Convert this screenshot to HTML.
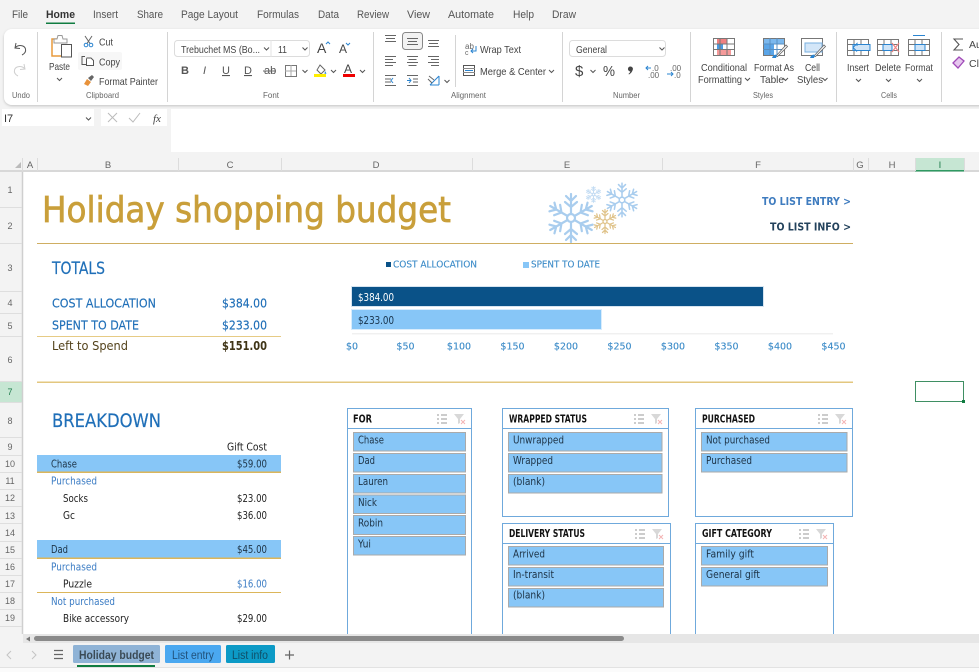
<!DOCTYPE html>
<html><head><meta charset="utf-8"><title>Holiday budget</title>
<style>
html,body{margin:0;padding:0;background:#fff;overflow:hidden}
svg{display:block}
.u{font-family:"Liberation Sans",sans-serif;font-size:10.5px;fill:#444}
.g{font-family:"Liberation Sans",sans-serif;font-size:8.5px;fill:#666}
.m{font-family:"Liberation Sans",sans-serif;font-size:11px;fill:#555}
.h{font-family:"Liberation Sans",sans-serif;font-size:10px;fill:#666}
.r{font-family:"Liberation Sans",sans-serif;font-size:9px;fill:#666;text-anchor:middle}
.c{font-family:"DejaVu Sans",sans-serif;font-size:10.5px;fill:#222}
.b{font-family:"DejaVu Sans",sans-serif;font-size:10.5px;fill:#3b7cc4}
.n{font-family:"DejaVu Sans",sans-serif;font-size:12.5px;fill:#1f6fb8;stroke:#1f6fb8;stroke-width:.15px}
.a{font-family:"DejaVu Sans",sans-serif;font-size:9.5px;fill:#3b8bc8;stroke:#3b8bc8;stroke-width:.12px}
.s{font-family:"DejaVu Sans",sans-serif;font-size:10.5px;fill:#1d3346}
.t{font-family:"DejaVu Sans",sans-serif;font-size:10.5px;font-weight:bold;fill:#111}
</style></head><body>
<svg width="979" height="672" viewBox="0 0 979 672" xmlns="http://www.w3.org/2000/svg">
<defs>
<filter id="sh" x="-2%" y="-10%" width="104%" height="125%"><feDropShadow dx="0" dy="1" stdDeviation="1.2" flood-color="#000" flood-opacity=".2"/></filter>
<g id="flake" fill="none" stroke-linecap="round">
<circle cx="0" cy="0" r="4"/>
<g id="arm"><path d="M0-4V-24M0-11l-6-5M0-11l6-5M0-17l-5-5M0-17l5-5"/></g>
<use href="#arm" transform="rotate(60)"/><use href="#arm" transform="rotate(120)"/><use href="#arm" transform="rotate(180)"/><use href="#arm" transform="rotate(240)"/><use href="#arm" transform="rotate(300)"/>
</g>
<g id="sl-ico" fill="none">
<path d="M0 2h2M0 6h2M0 10h2M4 2h6M4 6h6M4 10h6" stroke="#999" stroke-width="1"/>
<path d="M17 1h10l-4 5v4l-2 1V6z" fill="#d8d8d8"/><path d="M24 7l4 4M28 7l-4 4" stroke="#f4b4b4" stroke-width="1"/>
</g>
</defs>

<rect width="979" height="672" fill="#f3f3f3"/>

<!-- menu -->
<text class="m" x="12" y="18" textLength="16" lengthAdjust="spacingAndGlyphs">File</text>
<text class="m" x="46" y="18" textLength="29" lengthAdjust="spacingAndGlyphs" style="font-weight:bold;fill:#333">Home</text>
<rect x="46" y="22.500" width="29" height="1.500" fill="#107c41"/>
<text class="m" x="93" y="18" textLength="25" lengthAdjust="spacingAndGlyphs">Insert</text>
<text class="m" x="137" y="18" textLength="26" lengthAdjust="spacingAndGlyphs">Share</text>
<text class="m" x="181" y="18" textLength="57" lengthAdjust="spacingAndGlyphs">Page Layout</text>
<text class="m" x="257" y="18" textLength="42" lengthAdjust="spacingAndGlyphs">Formulas</text>
<text class="m" x="318" y="18" textLength="21" lengthAdjust="spacingAndGlyphs">Data</text>
<text class="m" x="357" y="18" textLength="32" lengthAdjust="spacingAndGlyphs">Review</text>
<text class="m" x="407" y="18" textLength="23" lengthAdjust="spacingAndGlyphs">View</text>
<text class="m" x="448" y="18" textLength="46" lengthAdjust="spacingAndGlyphs">Automate</text>
<text class="m" x="513" y="18" textLength="21" lengthAdjust="spacingAndGlyphs">Help</text>
<text class="m" x="552" y="18" textLength="24" lengthAdjust="spacingAndGlyphs">Draw</text>

<!-- ribbon -->
<rect x="4" y="29" width="990" height="76" rx="8" fill="#fff" filter="url(#sh)"/>
<g stroke="#d4d4d4" stroke-width="1">
<path d="M37.500 32V102M167.500 32V102M373.500 32V102M455.500 35V87M562.500 32V102M690.500 32V102M836.500 32V102M941.500 32V102"/>
</g>
<text class="g" x="12" y="98" textLength="18" lengthAdjust="spacingAndGlyphs">Undo</text>
<text class="g" x="86" y="98" textLength="33" lengthAdjust="spacingAndGlyphs">Clipboard</text>
<text class="g" x="263" y="98" textLength="16" lengthAdjust="spacingAndGlyphs">Font</text>
<text class="g" x="451" y="98" textLength="35" lengthAdjust="spacingAndGlyphs">Alignment</text>
<text class="g" x="613" y="98" textLength="27" lengthAdjust="spacingAndGlyphs">Number</text>
<text class="g" x="753" y="98" textLength="20" lengthAdjust="spacingAndGlyphs">Styles</text>
<text class="g" x="881" y="98" textLength="16" lengthAdjust="spacingAndGlyphs">Cells</text>

<!-- undo / redo -->
<path d="M16 43l-1 5 5 .5M15.500 47.500c3-3 9-2.500 10 1.500 .7 3-1.500 5-3.500 6" fill="none" stroke="#555" stroke-width="1"/>
<path d="M24 64l1 5-5 .5M24.500 68.500c-3-3-9-2.500-10 1.500-.7 3 1.500 5 3.500 6" fill="none" stroke="#cfcfcf" stroke-width="1"/>

<!-- paste -->
<path d="M63 39h-11v17h9" fill="none" stroke="#e89a3c" stroke-width="1.500"/>
<path d="M54 39h3l1-3.500h4l1 3.500h4v4h-13z" fill="#fff" stroke="#999"/>
<rect x="61.500" y="44.500" width="10" height="12.500" fill="#fff" stroke="#555"/>
<text class="u" x="49" y="70" textLength="21" lengthAdjust="spacingAndGlyphs">Paste</text>
<path d="M57 78l2.500 2.500L62 78" fill="none" stroke="#555"/>
<!-- cut copy painter -->
<path d="M85 36l5 7.500M92 36l-5 7.500" stroke="#666" fill="none"/>
<circle cx="86" cy="45" r="1.800" fill="none" stroke="#2a84d0"/><circle cx="91" cy="45" r="1.800" fill="none" stroke="#2a84d0"/>
<text class="u" x="99" y="45.500" textLength="14" lengthAdjust="spacingAndGlyphs">Cut</text>
<rect x="78" y="52" width="44" height="18" rx="2" fill="#f7f7f7"/>
<path d="M85 56.500h-3v8h4" fill="none" stroke="#555"/><path d="M86.500 58.500v7h7v-5l-2.500-2.500h-4.500" fill="#fff" stroke="#555"/>
<text class="u" x="99" y="65.500" textLength="21" lengthAdjust="spacingAndGlyphs">Copy</text>
<path d="M84 84l3-5 4 3-3 4z" fill="#e8923a"/><path d="M88 78l4-3 2 2-3 4z" fill="#666"/>
<text class="u" x="99" y="85" textLength="59" lengthAdjust="spacingAndGlyphs">Format Painter</text>

<!-- font -->
<rect x="174.500" y="40.500" width="135" height="16" rx="3" fill="#fff" stroke="#dcdcdc"/>
<path d="M271 40v17" stroke="#e3e3e3"/>
<text class="u" x="181" y="53" textLength="79" lengthAdjust="spacingAndGlyphs">Trebuchet MS (Bo...</text>
<text class="u" x="278" y="53" textLength="9" lengthAdjust="spacingAndGlyphs">11</text>
<path d="M264 47.500l2.500 2.500 2.500-2.500M302.500 47.500l2.500 2.500 2.500-2.500" fill="none" stroke="#555"/>
<text class="u" x="317" y="53" style="font-size:14px">A</text><path d="M326 44l2-2 2 2" stroke="#2a84d0" fill="none"/>
<text class="u" x="339" y="53" style="font-size:12px">A</text><path d="M346 43l2 2 2-2" stroke="#2a84d0" fill="none"/>
<g style="font-family:'Liberation Sans',sans-serif;font-size:11px;fill:#555">
<text x="181" y="74" font-weight="bold">B</text>
<text x="203" y="74" font-style="italic">I</text>
<text x="222" y="74" text-decoration="underline">U</text>
<text x="244" y="74" text-decoration="underline">D</text>
<text x="264" y="74">ab</text>
</g>
<path d="M263 71h13" stroke="#666"/>
<rect x="285.500" y="65.500" width="11" height="11" fill="none" stroke="#777"/><path d="M291 65v11M285 71h11" stroke="#aaa"/>
<path d="M302.500 70l2.500 2.500 2.500-2.500M331 70l2.500 2.500 2.500-2.500M360 70l2.500 2.500 2.500-2.500" fill="none" stroke="#555"/>
<path d="M320 65l5 5-4 4-4-4z" fill="#fff" stroke="#666"/><path d="M325 71l1.500 2.500-2 .5z" fill="#2a84d0"/>
<rect x="314" y="74" width="12" height="3" fill="#ffee00"/>
<text class="u" x="344" y="73" style="font-size:12px">A</text>
<rect x="343" y="74" width="12" height="3" fill="#e00"/>

<!-- alignment -->
<rect x="402.500" y="32.500" width="20" height="17" rx="3" fill="#f2f2f2" stroke="#888"/>
<g stroke="#666" stroke-width="1" fill="none">
<path d="M385 35.500h11M386 38.500h9M385 41.500h11"/>
<path d="M407 38.500h11M408 41.500h9M407 44.500h11"/>
<path d="M428 40.500h11M429 43.500h9M428 46.500h11"/>
<path d="M385 56.500h11M385 59.500h8M385 62.500h11M385 65.500h8"/>
<path d="M407 56.500h11M408.500 59.500h8M407 62.500h11M408.500 65.500h8"/>
<path d="M428 56.500h11M431 59.500h8M428 62.500h11M431 65.500h8"/>
<path d="M385 75.500h11M385 85.500h11M385 79h6M385 82h6"/>
<path d="M407 75.500h11M407 85.500h11M413 79h5M413 82h5"/>
</g>
<path d="M393 78l-2 2.500 2 2.500M407 80.500h4M409 78l2 2.500-2 2.500" fill="none" stroke="#2a84d0"/>
<path d="M430 85l9-9M430 85h9M439 76v9" fill="none" stroke="#2a84d0"/>
<path d="M429 76l5 4M428 79l4 4" stroke="#666" fill="none"/>
<path d="M444.500 80l2.500 2.500 2.500-2.500" fill="none" stroke="#555"/>
<text class="h" x="465" y="49" style="font-size:8px">ab</text><text class="h" x="465" y="55" style="font-size:7px">c</text>
<path d="M476 46v5h-5M473 49l-2 2 2 2" fill="none" stroke="#2a84d0"/>
<text class="u" x="480" y="53" textLength="41" lengthAdjust="spacingAndGlyphs">Wrap Text</text>
<rect x="463.500" y="65.500" width="11" height="10" fill="none" stroke="#555"/><path d="M463 68.500h12M463 72.500h12" stroke="#888"/><path d="M465 70.500h8" stroke="#2a84d0"/>
<text class="u" x="480" y="75" textLength="66" lengthAdjust="spacingAndGlyphs">Merge &amp; Center</text>
<path d="M549 70l2.500 2.500 2.500-2.500" fill="none" stroke="#555"/>

<!-- number -->
<rect x="569.500" y="40.500" width="96" height="16" rx="3" fill="#fff" stroke="#dcdcdc"/>
<text class="u" x="576" y="53" textLength="31" lengthAdjust="spacingAndGlyphs">General</text>
<path d="M659.500 47.500l2.500 2.500 2.500-2.500M590.500 70l2.500 2.500 2.500-2.500" fill="none" stroke="#555"/>
<text class="u" x="575" y="76" style="font-size:15px">$</text>
<text class="u" x="603" y="76" textLength="12" lengthAdjust="spacingAndGlyphs" style="font-size:15px">%</text>
<path d="M630.500 66.500a2.500 2.500 0 0 1 2 4c-.6 1.500-1.800 3-3.500 4l-.5-.6c1-.8 1.600-1.500 1.800-2.500a2.200 2.200 0 0 1 .2-4.900z" fill="#444"/>
<text class="g" x="652" y="71" style="font-size:8px">.0</text><text class="g" x="648" y="78" style="font-size:8px">.00</text>
<path d="M646 68h5M648 66l-2 2 2 2" fill="none" stroke="#2a84d0"/>
<text class="g" x="670" y="71" style="font-size:8px">.00</text><text class="g" x="674" y="78" style="font-size:8px">.0</text>
<path d="M667 74h6M671 72l2 2-2 2" fill="none" stroke="#2a84d0"/>

<!-- styles -->
<rect x="713.500" y="38.500" width="21" height="17" fill="#fff" stroke="#777"/>
<rect x="717" y="39" width="10" height="5" fill="#f08080"/><rect x="717" y="44" width="6" height="5" fill="#4a9ae0"/><rect x="717" y="49" width="14" height="6" fill="#f59a9a"/>
<path d="M713 44h22M713 49.500h22M720 38v17M727 38v17" stroke="#777" fill="none"/>
<text class="u" x="701" y="71" textLength="46" lengthAdjust="spacingAndGlyphs">Conditional</text>
<text class="u" x="698" y="83" textLength="44" lengthAdjust="spacingAndGlyphs">Formatting</text>
<path d="M745 78l2.500 2.500L750 78M783 78l2.500 2.500L788 78M822.500 78l2.500 2.500 2.500-2.500" fill="none" stroke="#555"/>
<rect x="763.500" y="38.500" width="21" height="17" fill="#fff" stroke="#777"/>
<rect x="764" y="39" width="20" height="5" fill="#7bb8ee"/><rect x="764" y="44" width="10" height="11" fill="#5aa5e8"/>
<path d="M763 44h21M763 49.500h21M770 38v17M777 38v17" stroke="#5a8fc0" fill="none"/>
<path d="M776 56l10-11 1.500 1.500-10 10z" fill="#fff" stroke="#666" stroke-width=".8"/><path d="M772 58c1-3 3-4 5-3l-1 3z" fill="#2a84d0"/>
<text class="u" x="754" y="71" textLength="40" lengthAdjust="spacingAndGlyphs">Format As</text>
<text class="u" x="760" y="83" textLength="24" lengthAdjust="spacingAndGlyphs">Table</text>
<rect x="801.500" y="38.500" width="21" height="17" fill="#fff" stroke="#777"/><rect x="805" y="43" width="17" height="9" fill="#d3e6f8" stroke="#7ab0e0"/>
<path d="M814 56l10-11 1.500 1.500-10 10z" fill="#fff" stroke="#666" stroke-width=".8"/><path d="M810 58c1-3 3-4 5-3l-1 3z" fill="#2a84d0"/>
<text class="u" x="805" y="71" textLength="15" lengthAdjust="spacingAndGlyphs">Cell</text>
<text class="u" x="797" y="83" textLength="26" lengthAdjust="spacingAndGlyphs">Styles</text>

<!-- cells -->
<rect x="847.500" y="39.500" width="21" height="16" fill="#fff" stroke="#777"/><path d="M847 44.500h22M847 50.500h22M854 39v16M861 39v16" stroke="#777"/>
<rect x="853" y="44.500" width="17" height="6" fill="#cfe4f7" stroke="#2a84d0"/><path d="M853 47.500l4-4v2.500M853 47.500l4 4" fill="none" stroke="#2a84d0"/>
<text class="u" x="847" y="71" textLength="22" lengthAdjust="spacingAndGlyphs">Insert</text>
<rect x="877.500" y="39.500" width="21" height="16" fill="#fff" stroke="#777"/><path d="M877 44.500h22M877 50.500h22M884 39v16M891 39v16" stroke="#777"/>
<rect x="883" y="44.500" width="9" height="6" fill="#cfe4f7" stroke="#2a84d0"/><path d="M892 43l7 9M899 43l-7 9" stroke="#f08080" stroke-width="1.100"/>
<text class="u" x="875" y="71" textLength="26" lengthAdjust="spacingAndGlyphs">Delete</text>
<rect x="908.500" y="39.500" width="21" height="16" fill="#fff" stroke="#777"/><path d="M908 44.500h22M908 50.500h22M915 39v16M922 39v16" stroke="#777"/>
<path d="M913 35.500h12" stroke="#2a84d0"/><rect x="915" y="44.500" width="10" height="6" fill="#cfe4f7" stroke="#2a84d0"/>
<text class="u" x="905" y="71" textLength="28" lengthAdjust="spacingAndGlyphs">Format</text>
<path d="M856 79l2.500 2.500L861 79M886 79l2.500 2.500L891 79M917 79l2.500 2.500L922 79" fill="none" stroke="#555"/>
<path d="M963 39h-9l5 5.500-5 5.500h9" fill="none" stroke="#555" stroke-width="1.100"/>
<text class="u" x="969" y="48">Au</text>
<path d="M953 63l6-6 5 4-6 7z" fill="#e6c7ee" stroke="#a04ab8" stroke-width="1.300"/>
<text class="u" x="969" y="67">Cle</text>

<!-- formula bar -->
<rect x="2" y="109" width="92" height="17" fill="#fff"/>
<text class="m" x="4" y="122" style="fill:#333">I7</text>
<path d="M86 117.500l2.500 2.500 2.500-2.500" fill="none" stroke="#555"/>
<rect x="101" y="109" width="66" height="17" fill="#fff"/>
<path d="M108 113l9 9M117 113l-9 9" stroke="#bbb" fill="none"/>
<path d="M129 118l4 4 7-9" stroke="#bbb" fill="none"/>
<text x="153" y="122" style="font-family:'Liberation Serif',serif;font-style:italic;font-size:11px;fill:#444">fx</text>
<rect x="171" y="109" width="808" height="43" fill="#fff"/>

<!-- headers -->
<rect x="0" y="157" width="979" height="14" fill="#f3f3f3"/>
<path d="M0 171h979" stroke="#cfcfcf" stroke-width="1.500"/>
<path d="M15 168l6-6v6z" fill="#bbb"/>
<rect x="915" y="158" width="49" height="13" fill="#c6e6d3"/><rect x="915" y="170" width="49" height="1.500" fill="#2f9a62"/>
<g stroke="#dcdcdc"><path d="M22.500 158v13M37.500 158v13M178.500 158v13M281.500 158v13M472.500 158v13M662.500 158v13M853.500 158v13M868.500 158v13M915.500 158v13M964.500 158v13"/></g>
<g class="r" style="font-size:9.500px">
<text x="30" y="168">A</text><text x="108" y="168">B</text><text x="230" y="168">C</text><text x="376" y="168">D</text><text x="567" y="168">E</text><text x="758" y="168">F</text><text x="860" y="168">G</text><text x="892" y="168">H</text><text x="940" y="168" style="fill:#1c7a4a">I</text>
</g>

<!-- sheet -->
<rect x="23" y="172" width="956" height="462" fill="#fff"/>
<rect x="0" y="172" width="22" height="462" fill="#f3f3f3"/>
<rect x="0" y="381" width="22" height="21" fill="#c6e6d3"/>
<path d="M22.500 172V634" stroke="#cfcfcf" stroke-width="1.500"/>
<g stroke="#dedede"><path d="M0 207.500h22M0 243.500h22M0 291.500h22M0 313.500h22M0 336.500h22M0 381.500h22M0 402.500h22M0 437.500h22M0 455.500h22M0 472.500h22M0 489.500h22M0 506.500h22M0 523.500h22M0 541.500h22M0 558.500h22M0 575.500h22M0 592.500h22M0 609.500h22M0 626.500h22"/></g>
<g class="r">
<text x="10" y="193">1</text><text x="10" y="229">2</text><text x="10" y="271">3</text><text x="10" y="306">4</text><text x="10" y="329">5</text><text x="10" y="363">6</text><text x="10" y="395" style="fill:#1c7a4a">7</text><text x="10" y="424">8</text><text x="10" y="450">9</text><text x="10" y="467">10</text><text x="10" y="484">11</text><text x="10" y="501">12</text><text x="10" y="519">13</text><text x="10" y="536">14</text><text x="10" y="553">15</text><text x="10" y="570">16</text><text x="10" y="587">17</text><text x="10" y="604">18</text><text x="10" y="621">19</text>
</g>

<!-- title -->
<text x="42" y="222" textLength="409" lengthAdjust="spacingAndGlyphs" style="font-family:'DejaVu Sans',sans-serif;font-size:35.500px;fill:#c99f3a;stroke:#c99f3a;stroke-width:.7px">Holiday shopping budget</text>
<g transform="translate(571,218)" stroke="#a9cdee" stroke-width="2.200"><use href="#flake"/></g>
<g transform="translate(622,200) scale(.7)" stroke="#a9cdee" stroke-width="2.200"><use href="#flake"/></g>
<g transform="translate(593.500,194.500) scale(.33)" stroke="#c3dcf3" stroke-width="3"><use href="#flake"/></g>
<g transform="translate(605,221.500) scale(.5)" stroke="#e0c48c" stroke-width="2.500"><use href="#flake"/></g>

<text x="762" y="205" textLength="89" lengthAdjust="spacingAndGlyphs" style="font-family:'DejaVu Sans',sans-serif;font-size:10.500px;font-weight:bold;fill:#3f7cbf">TO LIST ENTRY &gt;</text>
<text x="770" y="230.500" textLength="81" lengthAdjust="spacingAndGlyphs" style="font-family:'DejaVu Sans',sans-serif;font-size:10.500px;font-weight:bold;fill:#23425c">TO LIST INFO &gt;</text>
<rect x="37" y="243" width="816" height="1" fill="#cfae62"/>

<!-- totals -->
<text x="52" y="274" textLength="53" lengthAdjust="spacingAndGlyphs" style="font-family:'DejaVu Sans',sans-serif;font-size:16.500px;fill:#1f6fb8;stroke:#1f6fb8;stroke-width:.2px">TOTALS</text>
<text class="n" x="52" y="307.500" textLength="104" lengthAdjust="spacingAndGlyphs">COST ALLOCATION</text>
<text class="n" x="222" y="307.500" textLength="45" lengthAdjust="spacingAndGlyphs">$384.00</text>
<text class="n" x="52" y="329.500" textLength="87" lengthAdjust="spacingAndGlyphs">SPENT TO DATE</text>
<text class="n" x="222" y="329.500" textLength="45" lengthAdjust="spacingAndGlyphs">$233.00</text>
<rect x="37" y="336" width="244" height="1" fill="#e6cb85"/>
<text x="52" y="350" textLength="76" lengthAdjust="spacingAndGlyphs" style="font-family:'DejaVu Sans',sans-serif;font-size:12.500px;fill:#54431c">Left to Spend</text>
<text x="222" y="350" textLength="45" lengthAdjust="spacingAndGlyphs" style="font-family:'DejaVu Sans',sans-serif;font-size:12.500px;font-weight:bold;fill:#3f3416">$151.00</text>
<rect x="37" y="381.500" width="816" height="1.500" fill="#e3c77f"/>

<!-- chart -->
<rect x="386" y="262" width="5" height="5" fill="#0a5288"/>
<text class="a" x="393" y="267.500" textLength="84" lengthAdjust="spacingAndGlyphs">COST ALLOCATION</text>
<rect x="523" y="262" width="6" height="6" fill="#87c6f7"/>
<text class="a" x="531" y="267.500" textLength="69" lengthAdjust="spacingAndGlyphs">SPENT TO DATE</text>
<rect x="351.500" y="286.500" width="412" height="20" fill="#0a5288" stroke="#d6e4f0"/>
<rect x="351.500" y="309.500" width="250" height="20" fill="#87c6f7" stroke="#d8ecfc"/>
<text x="358" y="301" textLength="36" lengthAdjust="spacingAndGlyphs" style="font-family:'DejaVu Sans',sans-serif;font-size:10.500px;fill:#fff">$384.00</text>
<text x="358" y="324" textLength="36" lengthAdjust="spacingAndGlyphs" style="font-family:'DejaVu Sans',sans-serif;font-size:10.500px;fill:#17324a">$233.00</text>
<rect x="352" y="333" width="481" height="1.500" fill="#f0f0f0"/>
<g class="a" text-anchor="middle">
<text x="352" y="349.500">$0</text><text x="405.500" y="349.500">$50</text><text x="459" y="349.500">$100</text><text x="512.500" y="349.500">$150</text><text x="566" y="349.500">$200</text><text x="619.500" y="349.500">$250</text><text x="673" y="349.500">$300</text><text x="726.500" y="349.500">$350</text><text x="780" y="349.500">$400</text><text x="833.500" y="349.500">$450</text>
</g>

<!-- selected cell -->
<rect x="915.500" y="381.500" width="48" height="20" fill="none" stroke="#3f8f63"/>
<rect x="962" y="400" width="3" height="3" fill="#107c41"/>

<!-- breakdown -->
<text x="52" y="427" textLength="109" lengthAdjust="spacingAndGlyphs" style="font-family:'DejaVu Sans',sans-serif;font-size:18.500px;fill:#1f6fb8;stroke:#1f6fb8;stroke-width:.2px">BREAKDOWN</text>
<text class="c" x="227" y="450.500" textLength="40" lengthAdjust="spacingAndGlyphs">Gift Cost</text>
<rect x="37" y="455" width="244" height="17" fill="#87c6f7"/><rect x="37" y="471.500" width="244" height="1.500" fill="#dcb65a"/>
<text class="s" x="51" y="467.500" textLength="26" lengthAdjust="spacingAndGlyphs">Chase</text>
<text class="s" x="237" y="467.500" textLength="30" lengthAdjust="spacingAndGlyphs">$59.00</text>
<text class="b" x="51" y="484.500" textLength="46" lengthAdjust="spacingAndGlyphs">Purchased</text>
<text class="c" x="63" y="502" textLength="25" lengthAdjust="spacingAndGlyphs">Socks</text>
<text class="c" x="237" y="502" textLength="30" lengthAdjust="spacingAndGlyphs">$23.00</text>
<text class="c" x="63" y="519" textLength="12" lengthAdjust="spacingAndGlyphs">Gc</text>
<text class="c" x="237" y="519" textLength="30" lengthAdjust="spacingAndGlyphs">$36.00</text>
<rect x="37" y="540" width="244" height="18" fill="#87c6f7"/><rect x="37" y="557.500" width="244" height="1.500" fill="#dcb65a"/>
<text class="s" x="51" y="553" textLength="17" lengthAdjust="spacingAndGlyphs">Dad</text>
<text class="s" x="237" y="553" textLength="30" lengthAdjust="spacingAndGlyphs">$45.00</text>
<text class="b" x="51" y="570.500" textLength="46" lengthAdjust="spacingAndGlyphs">Purchased</text>
<text class="c" x="63" y="587.500" textLength="29" lengthAdjust="spacingAndGlyphs">Puzzle</text>
<text class="b" x="237" y="587.500" textLength="30" lengthAdjust="spacingAndGlyphs">$16.00</text>
<rect x="37" y="592" width="244" height="1" fill="#dcb65a"/>
<text class="b" x="51" y="605" textLength="64" lengthAdjust="spacingAndGlyphs">Not purchased</text>
<text class="c" x="63" y="622" textLength="66" lengthAdjust="spacingAndGlyphs">Bike accessory</text>
<text class="c" x="237" y="622" textLength="30" lengthAdjust="spacingAndGlyphs">$29.00</text>

<!-- slicers -->
<g fill="#fff" stroke="#6fa9dc" stroke-width="1">
<rect x="347.500" y="408.500" width="124" height="240"/><path d="M347 428.500h125"/>
<rect x="502.500" y="408.500" width="166" height="108"/><path d="M502 428.500h167"/>
<rect x="502.500" y="523.500" width="168" height="125"/><path d="M502 543.500h169"/>
<rect x="695.500" y="408.500" width="157" height="108"/><path d="M695 428.500h158"/>
<rect x="695.500" y="523.500" width="138" height="125"/><path d="M695 543.500h139"/>
</g>
<use href="#sl-ico" x="437" y="413"/><use href="#sl-ico" x="634" y="413"/><use href="#sl-ico" x="635" y="528"/><use href="#sl-ico" x="818" y="413"/><use href="#sl-ico" x="799" y="528"/>
<g>
<text class="t" x="353" y="422.500" textLength="19" lengthAdjust="spacingAndGlyphs">FOR</text>
<text class="t" x="509" y="422.500" textLength="78" lengthAdjust="spacingAndGlyphs">WRAPPED STATUS</text>
<text class="t" x="509" y="537" textLength="76" lengthAdjust="spacingAndGlyphs">DELIVERY STATUS</text>
<text class="t" x="702" y="422.500" textLength="53" lengthAdjust="spacingAndGlyphs">PURCHASED</text>
<text class="t" x="702" y="537" textLength="70" lengthAdjust="spacingAndGlyphs">GIFT CATEGORY</text>
</g>
<g fill="#87c6f7" stroke="#aaaaaa" stroke-width="1">
<rect x="353.500" y="432.500" width="112" height="18.500"/><rect x="353.500" y="453.500" width="112" height="18.500"/><rect x="353.500" y="474.500" width="112" height="18.500"/><rect x="353.500" y="495" width="112" height="18.500"/><rect x="353.500" y="515.500" width="112" height="19"/><rect x="353.500" y="536.500" width="112" height="18.500"/>
<rect x="508.500" y="432.500" width="153.500" height="18.500"/><rect x="508.500" y="453.500" width="153.500" height="18.500"/><rect x="508.500" y="474.500" width="153.500" height="18.500"/>
<rect x="508.500" y="546.500" width="155" height="18.500"/><rect x="508.500" y="567.500" width="155" height="18.500"/><rect x="508.500" y="588.500" width="155" height="18.500"/>
<rect x="701.500" y="432.500" width="145.500" height="18.500"/><rect x="701.500" y="453.500" width="145.500" height="18.500"/>
<rect x="701.500" y="546.500" width="126" height="18.500"/><rect x="701.500" y="567.500" width="126" height="18.500"/>
</g>
<g>
<text class="s" x="358" y="443.500" textLength="26" lengthAdjust="spacingAndGlyphs">Chase</text>
<text class="s" x="358" y="464" textLength="17" lengthAdjust="spacingAndGlyphs">Dad</text>
<text class="s" x="358" y="485" textLength="30" lengthAdjust="spacingAndGlyphs">Lauren</text>
<text class="s" x="358" y="506" textLength="19" lengthAdjust="spacingAndGlyphs">Nick</text>
<text class="s" x="358" y="526.500" textLength="25" lengthAdjust="spacingAndGlyphs">Robin</text>
<text class="s" x="358" y="547.500" textLength="13" lengthAdjust="spacingAndGlyphs">Yui</text>
<text class="s" x="513" y="443.500" textLength="51" lengthAdjust="spacingAndGlyphs">Unwrapped</text>
<text class="s" x="513" y="464" textLength="40" lengthAdjust="spacingAndGlyphs">Wrapped</text>
<text class="s" x="513" y="485" textLength="32" lengthAdjust="spacingAndGlyphs">(blank)</text>
<text class="s" x="513" y="557.500" textLength="32" lengthAdjust="spacingAndGlyphs">Arrived</text>
<text class="s" x="513" y="578" textLength="41" lengthAdjust="spacingAndGlyphs">In-transit</text>
<text class="s" x="513" y="598.500" textLength="32" lengthAdjust="spacingAndGlyphs">(blank)</text>
<text class="s" x="706" y="443.500" textLength="64" lengthAdjust="spacingAndGlyphs">Not purchased</text>
<text class="s" x="706" y="464" textLength="46" lengthAdjust="spacingAndGlyphs">Purchased</text>
<text class="s" x="706" y="557.500" textLength="48" lengthAdjust="spacingAndGlyphs">Family gift</text>
<text class="s" x="706" y="578" textLength="54" lengthAdjust="spacingAndGlyphs">General gift</text>
</g>

<!-- scrollbar -->
<rect x="0" y="634" width="979" height="9" fill="#e6e6e6"/>
<rect x="0" y="634" width="23" height="9" fill="#f3f3f3"/>
<path d="M30 636.500v5l-4-2.500z" fill="#777"/>
<rect x="34" y="636" width="590" height="5" rx="2.500" fill="#8a8a8a"/>

<!-- tabs -->
<rect x="0" y="643" width="979" height="24" fill="#f3f3f3"/>
<rect x="0" y="667" width="979" height="5" fill="#fbfbfb"/>
<path d="M0 667.500h979" stroke="#e2e2e2"/>
<path d="M11 651l-4 4 4 4M32 651l4 4-4 4" fill="none" stroke="#c4c4c4"/>
<path d="M54 650.500h9M54 654.500h9M54 658.500h9" stroke="#666" stroke-width="1.200"/>
<rect x="73" y="645" width="87" height="18" rx="1.500" fill="#8fb3d6"/>
<text x="79" y="659" textLength="75" lengthAdjust="spacingAndGlyphs" style="font-family:'Liberation Sans',sans-serif;font-size:11.500px;font-weight:bold;fill:#3a4a55">Holiday budget</text>
<rect x="77" y="665" width="78" height="2" fill="#107c41"/>
<rect x="165" y="645" width="56" height="18" rx="1.500" fill="#4aa8f0"/>
<text x="172" y="659" textLength="42" lengthAdjust="spacingAndGlyphs" style="font-family:'Liberation Sans',sans-serif;font-size:11.500px;fill:#21527c">List entry</text>
<rect x="226" y="645" width="49" height="18" rx="1.500" fill="#0c9ac6"/>
<text x="232" y="659" textLength="36" lengthAdjust="spacingAndGlyphs" style="font-family:'Liberation Sans',sans-serif;font-size:11.500px;fill:#0f4f68">List info</text>
<path d="M285 655h9M289.500 650.500v9" stroke="#666" stroke-width="1.200"/>
</svg>
</body></html>
